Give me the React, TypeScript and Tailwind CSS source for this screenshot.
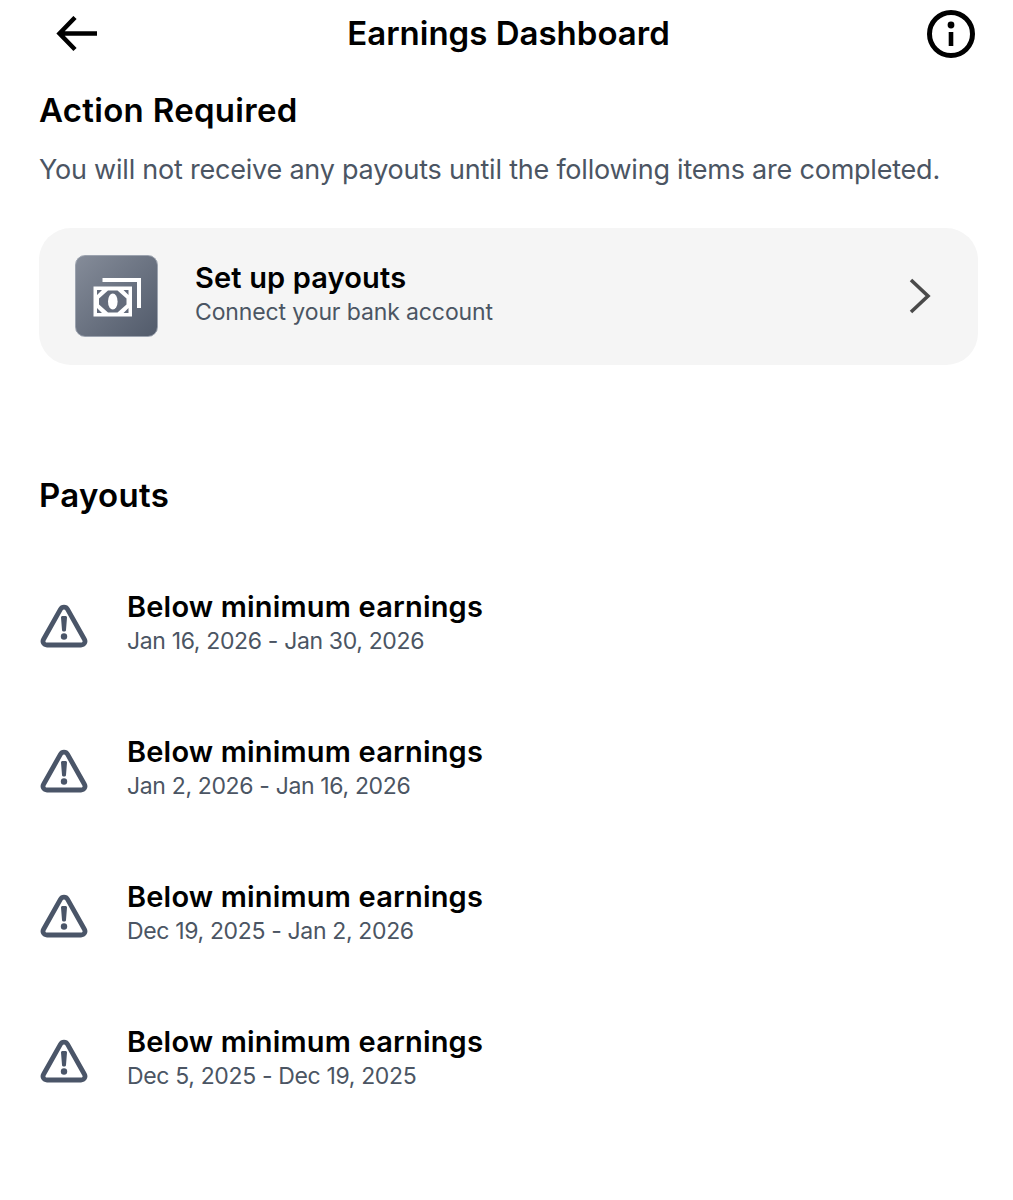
const payouts = [
  "Jan 16, 2026 - Jan 30, 2026",
  "Jan 2, 2026 - Jan 16, 2026",
  "Dec 19, 2025 - Jan 2, 2026",
  "Dec 5, 2025 - Dec 19, 2025",
];

function BackIcon() {
  return (
    <svg width="42" height="36" viewBox="0 0 42 36" fill="none" stroke="#000" strokeWidth="4.5" className="ml-[1px]">
      <path d="M3 17.5H41M19 1.5L3.5 17.5L19 33.5" />
    </svg>
  );
}

function InfoIcon() {
  return (
    <svg width="48" height="48" viewBox="0 0 48 48" fill="none">
      <circle cx="24" cy="24" r="21.5" stroke="#000" strokeWidth="5" />
      <circle cx="24" cy="15" r="3.4" fill="#000" />
      <rect x="21.7" y="22" width="4.6" height="14" fill="#000" />
    </svg>
  );
}

function MoneyIcon() {
  return (
    <svg width="48" height="42" viewBox="0 0 48 42" fill="none">
      <path d="M9.5 5H46V33" stroke="#fff" strokeWidth="4" />
      <rect x="0.5" y="11.5" width="38.5" height="30" fill="#fff" />
      <path d="M4 15H9L4 20ZM35.5 15H30.5L35.5 20ZM4 38H9L4 33ZM35.5 38H30.5L35.5 33Z" fill="#646c7b" />
      <path d="M15 15.5H24.5L33.5 23.5V29.5L24.5 37.5H15L6 29.5V23.5Z" fill="#646c7b" />
      <ellipse cx="19.8" cy="26.5" rx="4.8" ry="8" fill="#fff" />
    </svg>
  );
}

function WarningIcon() {
  return (
    <svg width="48" height="44" viewBox="0 0 48 44" fill="none" className="mt-[4px] ml-[1px]">
      <path
        d="M24 3.2C22.4 3.2 21.2 4 20.4 5.4L3.6 35.2C2 38 3.8 41 7 41H41C44.2 41 46 38 44.4 35.2L27.6 5.4C26.8 4 25.6 3.2 24 3.2Z"
        stroke="#4a5568"
        strokeWidth="4.8"
        strokeLinejoin="round"
      />
      <path d="M21 13.5C21 12.5 21.8 12 22.5 12H25.5C26.2 12 27 12.5 27 13.5L26 26C26 27 25 27.5 24 27.5C23 27.5 22 27 22 26Z" fill="#4a5568" />
      <circle cx="24" cy="32.5" r="3.2" fill="#4a5568" />
    </svg>
  );
}

export default function App() {
  return (
    <div className="h-[1200px] w-[1013px] overflow-hidden bg-white font-['Inter',sans-serif]">
      <header className="flex h-[68px] items-center justify-between pl-[55px] pr-[38px]">
        <BackIcon />
        <h1 className="mr-[8px] text-[33px] font-semibold text-black">Earnings Dashboard</h1>
        <InfoIcon />
      </header>

      <main className="px-[39px]">
        <h2 className="mt-[22px] text-[33px] leading-[40px] font-semibold tracking-[0.3px] text-black">
          Action Required
        </h2>
        <p className="mt-[20px] text-[27px] leading-[40px] tracking-[-0.22px] whitespace-nowrap text-[#4b5563]">
          You will not receive any payouts until the following items are completed.
        </p>

        <div className="mt-[38px] flex h-[137px] w-[939px] items-center rounded-[32px] bg-[#f5f5f5] pl-[36px] pr-[46px]">
          <div className="mb-[1px] flex h-[82px] w-[83px] items-center justify-center rounded-[10px] border border-[#9ca3af] bg-gradient-to-br from-[#858c99] to-[#525b6b]">
            <MoneyIcon />
          </div>
          <div className="ml-[37px] flex-1 pb-[3px]">
            <div className="text-[29px] leading-[34px] font-semibold tracking-[0.15px] text-black">Set up payouts</div>
            <div className="text-[23px] leading-[34px] tracking-[-0.12px] text-[#4b5563]">Connect your bank account</div>
          </div>
          <svg width="24" height="36" viewBox="0 0 24 36" fill="none" stroke="#4a4a4a" strokeWidth="3.6" className="mb-[2px]">
            <path d="M3 2L20 18L3 34" />
          </svg>
        </div>

        <h2 className="mt-[110px] text-[33px] leading-[40px] font-semibold tracking-[0.3px] text-black">Payouts</h2>

        <ul className="mt-[75px] flex flex-col gap-[77px]">
          {payouts.map((range) => (
            <li key={range} className="flex h-[68px] items-center">
              <WarningIcon />
              <div className="ml-[39px]">
                <div className="text-[29px] leading-[34px] font-semibold tracking-[0.18px] text-black">Below minimum earnings</div>
                <div className="text-[23px] leading-[34px] tracking-[-0.35px] text-[#4b5563]">{range}</div>
              </div>
            </li>
          ))}
        </ul>
      </main>
    </div>
  );
}
